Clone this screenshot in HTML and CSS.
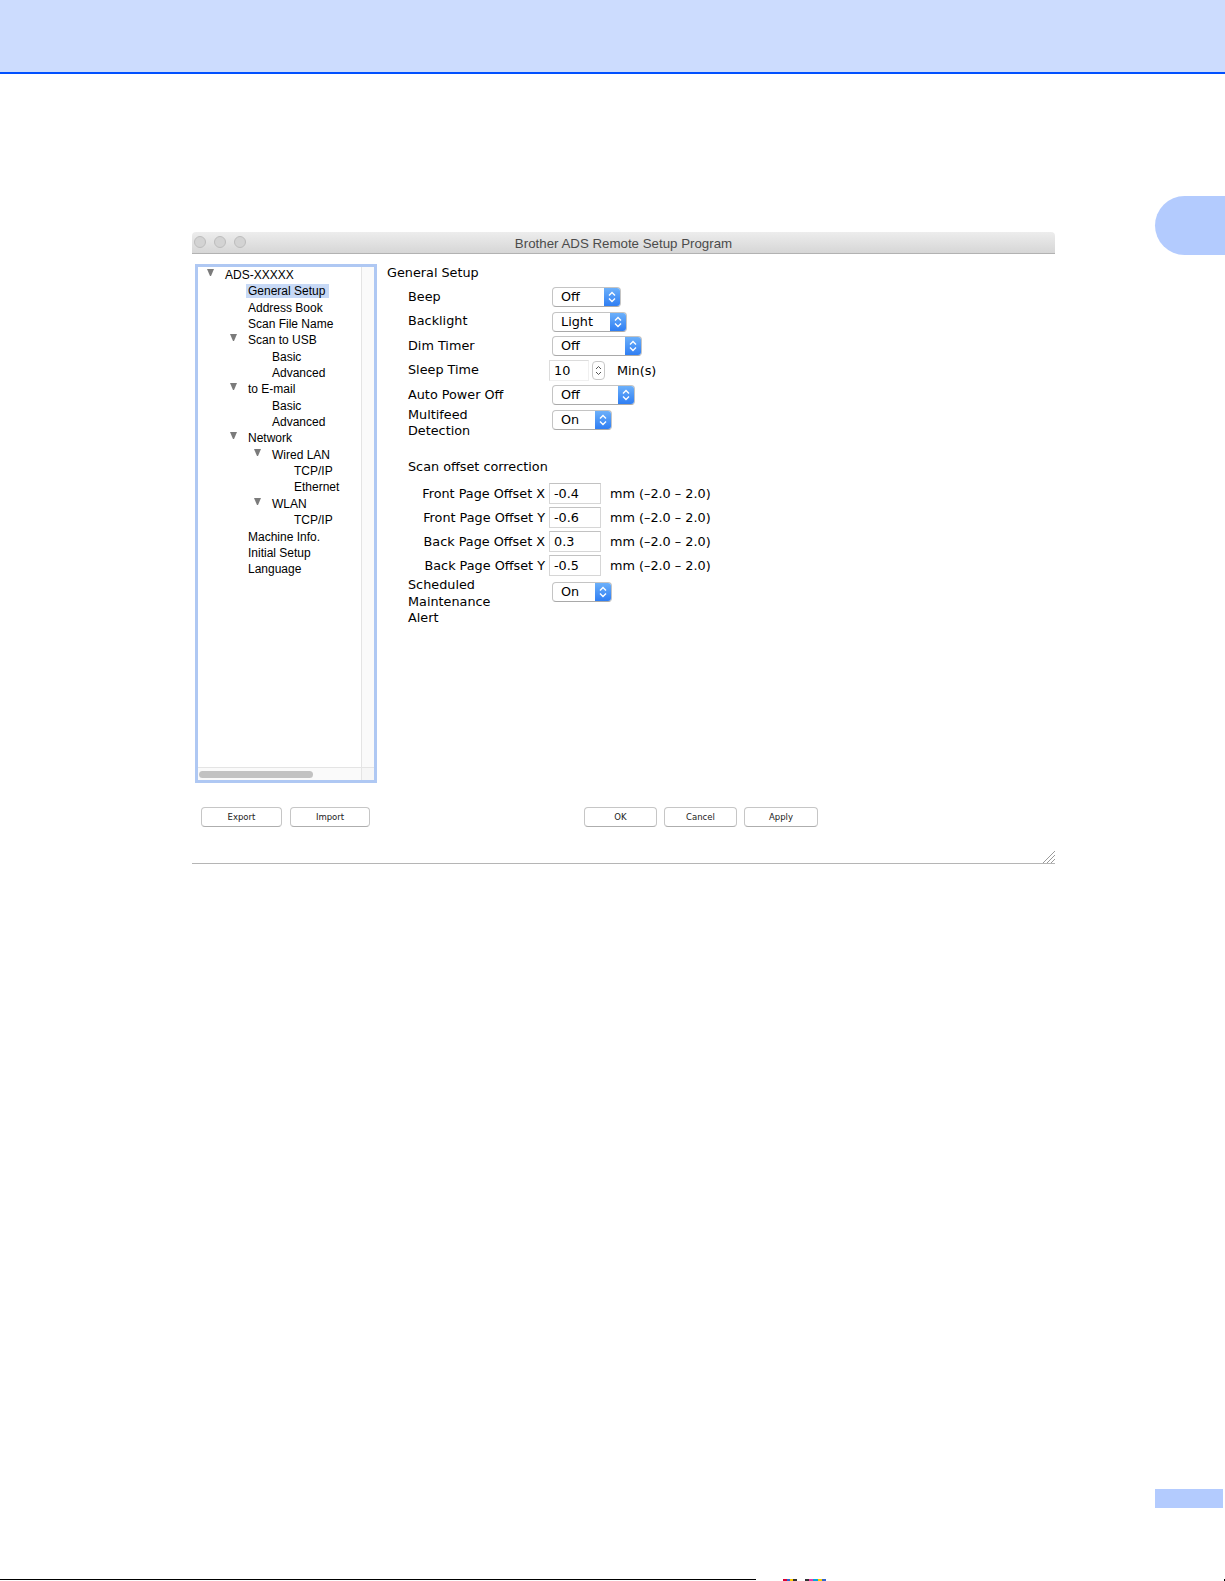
FILE: index.html
```html
<!DOCTYPE html>
<html>

<head>
    <meta charset="utf-8" />
    <title>Brother ADS Remote Setup Program</title>
    <link rel="stylesheet" href="styles.css">
</head>

<body>
    <div class="band"></div>

    <div class="main">
        <div class="window">
            <div class="titlebar">
                <div class="lights"><i></i><i></i><i></i></div>
                <div class="title">Brother ADS Remote Setup Program</div>
            </div>

            <div class="content">
                <div class="tree">
                    <div class="tree-view">
                        <ul class="nodes">
                            <li class="l0"><i class="tw"></i>ADS-XXXXX</li>
                            <li class="l1"><span class="sel">General Setup</span></li>
                            <li class="l1">Address Book</li>
                            <li class="l1">Scan File Name</li>
                            <li class="l1"><i class="tw"></i>Scan to USB</li>
                            <li class="l2">Basic</li>
                            <li class="l2">Advanced</li>
                            <li class="l1"><i class="tw"></i>to E-mail</li>
                            <li class="l2">Basic</li>
                            <li class="l2">Advanced</li>
                            <li class="l1"><i class="tw"></i>Network</li>
                            <li class="l2"><i class="tw"></i>Wired LAN</li>
                            <li class="l3">TCP/IP</li>
                            <li class="l3">Ethernet</li>
                            <li class="l2"><i class="tw"></i>WLAN</li>
                            <li class="l3">TCP/IP</li>
                            <li class="l1">Machine Info.</li>
                            <li class="l1">Initial Setup</li>
                            <li class="l1">Language</li>
                        </ul>
                    </div>
                    <div class="vtrack"></div>
                    <div class="htrack"><span class="thumb"></span></div>
                    <div class="corner"></div>
                </div>

                <div class="panel">
                    <h2>General Setup</h2>
                    <div class="settings">
                        <div class="row">
                            <label>Beep</label>
                            <div class="popup w69"><span>Off</span><b></b></div>
                        </div>
                        <div class="row">
                            <label>Backlight</label>
                            <div class="popup w75"><span>Light</span><b></b></div>
                        </div>
                        <div class="row">
                            <label>Dim Timer</label>
                            <div class="popup w90"><span>Off</span><b></b></div>
                        </div>
                        <div class="row">
                            <label>Sleep Time</label>
                            <div class="field sleep">10</div>
                            <div class="stepper"></div>
                            <span class="unit">Min(s)</span>
                        </div>
                        <div class="row">
                            <label>Auto Power Off</label>
                            <div class="popup w83"><span>Off</span><b></b></div>
                        </div>
                        <div class="row multi">
                            <label>Multifeed<br>Detection</label>
                            <div class="popup w60"><span>On</span><b></b></div>
                        </div>

                        <h3>Scan offset correction</h3>
                        <div class="offsets">
                            <div class="orow">
                                <label>Front Page Offset X</label>
                                <div class="field">-0.4</div>
                                <span class="range">mm (–2.0 – 2.0)</span>
                            </div>
                            <div class="orow">
                                <label>Front Page Offset Y</label>
                                <div class="field">-0.6</div>
                                <span class="range">mm (–2.0 – 2.0)</span>
                            </div>
                            <div class="orow">
                                <label>Back Page Offset X</label>
                                <div class="field">0.3</div>
                                <span class="range">mm (–2.0 – 2.0)</span>
                            </div>
                            <div class="orow">
                                <label>Back Page Offset Y</label>
                                <div class="field">-0.5</div>
                                <span class="range">mm (–2.0 – 2.0)</span>
                            </div>
                        </div>

                        <div class="row multi alert">
                            <label>Scheduled<br>Maintenance<br>Alert</label>
                            <div class="popup w60"><span>On</span><b></b></div>
                        </div>
                    </div>
                </div>
            </div>

            <div class="buttons">
                <div class="group">
                    <button class="w81">Export</button>
                    <button class="w80">Import</button>
                </div>
                <div class="group right">
                    <button class="w73">OK</button>
                    <button class="w73">Cancel</button>
                    <button class="w74">Apply</button>
                </div>
            </div>

            <div class="grip">
                <svg width="13" height="13" viewBox="0 0 13 13">
                    <path d="M1 13 L13 1 M5 13 L13 5 M9 13 L13 9" stroke="#9a9a9a" stroke-width="1" fill="none" />
                </svg>
            </div>
        </div>

        <div class="tab"></div>
    </div>

    <div class="foot-tab"></div>
    <div class="foot">
        <div class="rule"></div>
        <div class="marks"><i class="m1"></i><i class="m2"></i></div>
        <div class="dot"></div>
    </div>
</body>

</html>
```

FILE: styles.css
```css
/*
    reset
*/

* {
    box-sizing: border-box;
    margin: 0;
    padding: 0;
}

html,
body {
    width: 1225px;
    height: 1581px;
    overflow: hidden;
}

body {
    background: #fff;
    color: #000;
    font-family: 'DejaVu Sans', sans-serif;
}

ul {
    list-style: none;
}

/*
    page chrome
*/

.band {
    height: 74px;
    background: #ccdcfe;
    border-bottom: 2px solid #0050ff;
}

.main {
    display: flex;
    align-items: flex-start;
    margin-top: 122px;
}

.tab {
    margin-left: auto;
    width: 70px;
    height: 59px;
    background: #b3cbfe;
    border-radius: 30px 0 0 30px;
}

.foot-tab {
    margin: 625px 0 0 1155px;
    width: 68px;
    height: 19px;
    background: #b3cbfe;
}

.foot {
    display: flex;
    align-items: flex-end;
    margin-top: 71px;
    height: 2px;
}

.rule {
    width: 756px;
    height: 1px;
    align-self: flex-start;
    background: #000;
}

.marks {
    display: flex;
    margin-left: 27px;
    gap: 8px;
}

.marks i {
    height: 2px;
}

.marks .m1 {
    width: 14px;
    background: linear-gradient(90deg, #d03 0 25%, #36c 25% 50%, #fc0 50% 75%, #333 75%);
}

.marks .m2 {
    width: 21px;
    background: linear-gradient(90deg, #333 0 20%, #e3a 20% 40%, #0ad 40% 60%, #fc0 60% 80%, #36c 80%);
}

.dot {
    margin-left: auto;
    width: 1px;
    height: 2px;
    background: #000;
}

/*
    window
*/

.window {
    margin: 36px 0 0 192px;
    width: 863px;
    border-bottom: 1px solid #b5b5b5;
}

.titlebar {
    position: relative;
    height: 22px;
    background: linear-gradient(#ededed, #d6d6d6);
    border-bottom: 1px solid #b2b2b2;
    border-radius: 4px 4px 0 0;
}

.lights {
    position: absolute;
    top: 4px;
    left: 2px;
    display: flex;
    gap: 8px;
}

.lights i {
    width: 12px;
    height: 12px;
    border-radius: 50%;
    background: #d3d3d3;
    border: 1px solid #bdbdbd;
}

.title {
    padding-top: 2px;
    text-align: center;
    font-family: 'Liberation Sans', Arial, sans-serif;
    font-size: 13.3px;
    line-height: 20px;
    color: #4b4b4b;
}

.content {
    display: flex;
    align-items: flex-start;
    padding: 10px 0 0 3px;
}

/*
    tree
*/

.tree {
    display: grid;
    grid-template-columns: 164px 1fr;
    grid-template-rows: 501px 1fr;
    width: 182px;
    height: 519px;
    border: 3px solid #afc8f3;
    background: #fff;
}

.tree-view {
    border-right: 1px solid #e4e4e4;
    border-bottom: 1px solid #e4e4e4;
    overflow: hidden;
}

.vtrack {
    background: #fafafa;
    border-bottom: 1px solid #e4e4e4;
}

.htrack {
    background: #fafafa;
    border-right: 1px solid #e4e4e4;
}

.corner {
    background: #f6f6f6;
}

.thumb {
    display: block;
    margin: 3px 0 0 1px;
    width: 114px;
    height: 7px;
    border-radius: 4px;
    background: #c2c2c2;
}

.nodes li {
    font-family: 'Liberation Sans', Arial, sans-serif;
    font-size: 12px;
    line-height: 16.35px;
    height: 16.35px;
    white-space: nowrap;
}

.nodes .l0 { padding-left: 27px; }
.nodes .l1 { padding-left: 50px; }
.nodes .l2 { padding-left: 74px; }
.nodes .l3 { padding-left: 96px; }

.tw {
    display: inline-block;
    width: 7px;
    height: 0;
    margin: 0 11px 0 -18px;
    border-left: 3.5px solid transparent;
    border-right: 3.5px solid transparent;
    border-top: 7px solid #7b7b7b;
    vertical-align: 3px;
}

.sel {
    display: inline-block;
    margin-left: -2px;
    padding: 0 4px 0 2px;
    line-height: 14px;
    background: #c7d9f6;
}

/*
    settings panel
*/

.panel {
    padding-left: 10px;
    font-size: 12.8px;
}

.panel h2 {
    font-size: 12.8px;
    font-weight: normal;
    line-height: 17px;
}

.settings {
    margin: 4px 0 0 21px;
}

.row {
    display: flex;
    align-items: center;
    min-height: 24.4px;
}

.row label {
    width: 144px;
    line-height: 16.5px;
}

.row.multi {
    align-items: flex-start;
}

.row.multi .popup {
    margin-top: 3px;
}

.row.alert .popup {
    margin-top: 5px;
}

.popup {
    display: flex;
    height: 20px;
    background: #fff;
    border: 1px solid #c4c4c4;
    border-bottom-color: #a9a9a9;
    border-radius: 4px;
    overflow: hidden;
}

.popup span {
    flex: 1;
    padding-left: 8px;
    line-height: 18px;
}

.popup b {
    width: 16px;
    background-image: url("data:image/svg+xml,%3Csvg xmlns='http://www.w3.org/2000/svg' width='16' height='18'%3E%3Cpath d='M5 7.5 L8 4.5 L11 7.5 M5 10.5 L8 13.5 L11 10.5' stroke='white' stroke-width='1.4' fill='none'/%3E%3C/svg%3E"), linear-gradient(#6cb0fa, #2f7ef3);
}

.w60 { width: 60px; }
.w69 { width: 69px; }
.w75 { width: 75px; }
.w83 { width: 83px; }
.w90 { width: 90px; }

.field {
    height: 21px;
    padding-left: 4px;
    line-height: 19px;
    border: 1px solid #d6d6d6;
    border-top-color: #c2c2c2;
    background: #fff;
}

.field.sleep {
    margin-left: -3px;
    width: 40px;
    border-color: #f0f0f0;
    border-left-color: #dcdcdc;
    border-top-color: #dcdcdc;
}

.stepper {
    margin-left: 3px;
    width: 13px;
    height: 19px;
    border: 1px solid #c8c8c8;
    border-radius: 4px;
    background: #fff url("data:image/svg+xml,%3Csvg xmlns='http://www.w3.org/2000/svg' width='11' height='17'%3E%3Cpath d='M3 7 L5.5 4.5 L8 7 M3 10 L5.5 12.5 L8 10' stroke='%23555' stroke-width='1' fill='none'/%3E%3C/svg%3E") no-repeat;
}

.unit {
    margin-left: 12px;
}

.settings h3 {
    margin-top: 19px;
    font-size: 12.8px;
    font-weight: normal;
    line-height: 16.5px;
}

.offsets {
    margin-top: 6px;
}

.orow {
    display: flex;
    align-items: center;
    height: 24px;
}

.orow label {
    width: 137px;
    text-align: right;
}

.orow .field {
    margin-left: 4px;
    width: 52px;
}

.range {
    margin-left: 9px;
}

/*
    buttons and grip
*/

.buttons {
    display: flex;
    margin-top: 24px;
    padding-left: 9px;
}

.group {
    display: flex;
    gap: 8px;
}

.group.right {
    margin-left: 214px;
    gap: 7px;
}

button {
    height: 20px;
    background: #fff;
    border: 1px solid #c6c6c6;
    border-bottom-color: #aeaeae;
    border-radius: 4px;
    font-family: 'DejaVu Sans', sans-serif;
    font-size: 8.5px;
    color: #222;
}

.w73 { width: 73px; }
.w74 { width: 74px; }
.w80 { width: 80px; }
.w81 { width: 81px; }

.grip {
    display: flex;
    justify-content: flex-end;
    margin-top: 23px;
    height: 13px;
}

.grip svg {
    display: block;
}
```
